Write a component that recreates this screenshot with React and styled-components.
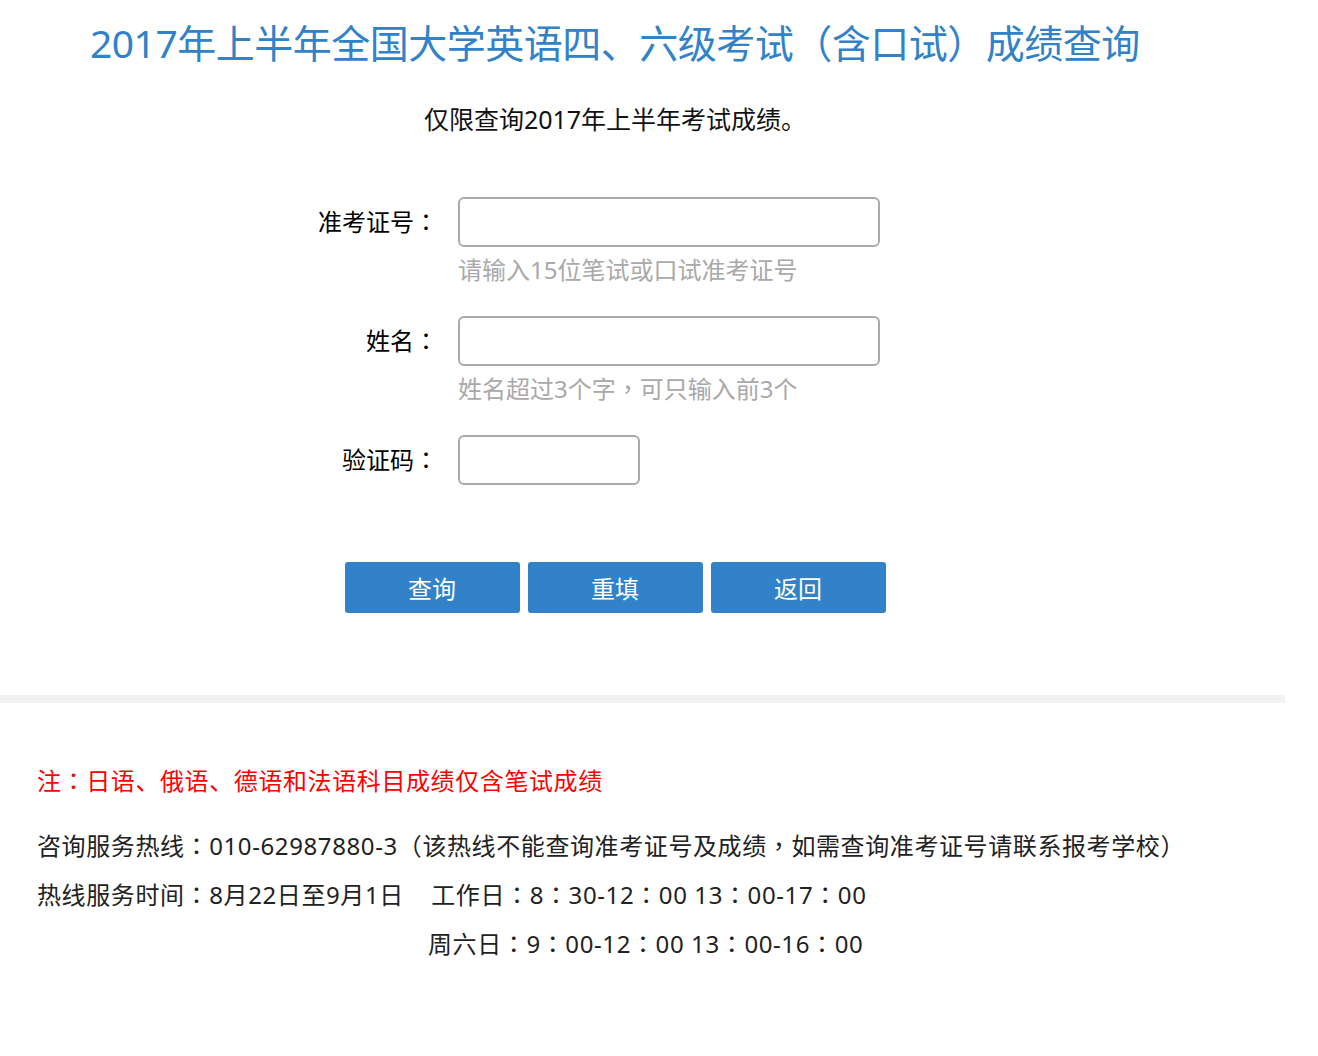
import React from 'react'
import styled, { createGlobalStyle } from 'styled-components'

const GlobalStyle = createGlobalStyle`
    body {
        margin: 0;
        background: #fff;
        font-family: "Noto Sans", "Noto Sans CJK SC", sans-serif;
        color: #111;
    }
`

const Page = styled.div`
    width: 1285px;
    padding-bottom: 60px;
`
const Main = styled.div`
    width: 1230px;
`
const Title = styled.h1`
    margin: 0;
    padding: 16px 0 0 90px;
    font-size: 39px;
    font-weight: normal;
    line-height: 54px;
    color: #3182c8;
    letter-spacing: -0.5px;
`
const Sub = styled.p`
    margin: 32px 0 0;
    text-align: center;
    font-size: 25px;
    line-height: 34px;
`
const Form = styled.div`
    margin-top: 61px;
    display: flex;
    flex-direction: column;
`
const Row = styled.div`
    display: grid;
    grid-template-columns: 438px 1fr;
    column-gap: 20px;
    align-items: center;
    margin-bottom: ${p => p.$hint ? '23px' : '0'};
`
const Label = styled.label`
    text-align: right;
    font-size: 24px;
    line-height: 50px;
    color: #000;
`
const Input = styled.input`
    box-sizing: border-box;
    width: ${p => p.$w}px;
    height: 50px;
    border: 2px solid #aaa;
    border-radius: 6px;
    font-size: 22px;
    padding: 0 10px;
    outline: none;
`
const Hint = styled.div`
    grid-column: 2;
    font-size: 24px;
    line-height: 46px;
    color: #a9a9a9;
`
const Buttons = styled.div`
    margin-top: 77px;
    display: flex;
    justify-content: center;
    gap: 8px;
`
const Button = styled.button`
    width: 175px;
    height: 51px;
    border: none;
    border-radius: 3px;
    background: #3182c8;
    color: #fff;
    font-family: inherit;
    font-size: 24px;
    cursor: pointer;
`
const Divider = styled.div`
    margin-top: 82px;
    height: 8px;
    background: #f2f2f2;
`
const Notes = styled.div`
    padding: 54px 0 0 37px;
    font-size: 24px;
    letter-spacing: 0.6px;
`
const Warn = styled.p`
    margin: 0 0 16px;
    color: #ff0000;
    line-height: 48px;
`
const Line = styled.p`
    margin: 0;
    line-height: 49px;
    color: #222;
    white-space: pre;
    padding-left: ${p => p.$indent || 0}px;
`
// centred full-width colon / comma like the original font
const Punct = styled.span`
    font-family: "Noto Sans CJK TC", sans-serif;
    line-height: 0;
`

const T = ({ children }) => (
    <>
        {children.split(/([：，])/).map((s, i) =>
            s === '：' || s === '，' ? <Punct key={i}>{s}</Punct> : s
        )}
    </>
)

const fields = [
    { label: '准考证号：', w: 422, hint: '请输入15位笔试或口试准考证号' },
    { label: '姓名：', w: 422, hint: '姓名超过3个字，可只输入前3个' },
    { label: '验证码：', w: 182 },
]

export default function App() {
    return (
        <Page>
            <GlobalStyle />
            <Main>
                <Title>2017年上半年全国大学英语四、六级考试（含口试）成绩查询</Title>
                <Sub>仅限查询2017年上半年考试成绩。</Sub>
                <Form>
                    {fields.map(f => (
                        <Row key={f.label} $hint={!!f.hint}>
                            <Label><T>{f.label}</T></Label>
                            <Input $w={f.w} />
                            {f.hint && <Hint><T>{f.hint}</T></Hint>}
                        </Row>
                    ))}
                </Form>
                <Buttons>
                    <Button>查询</Button>
                    <Button>重填</Button>
                    <Button>返回</Button>
                </Buttons>
            </Main>
            <Divider />
            <Notes>
                <Warn><T>注：日语、俄语、德语和法语科目成绩仅含笔试成绩</T></Warn>
                <Line><T>咨询服务热线：010-62987880-3（该热线不能查询准考证号及成绩，如需查询准考证号请联系报考学校）</T></Line>
                <Line><T>热线服务时间：8月22日至9月1日    工作日：8：30-12：00 13：00-17：00</T></Line>
                <Line $indent={391}><T>周六日：9：00-12：00 13：00-16：00</T></Line>
            </Notes>
        </Page>
    )
}
